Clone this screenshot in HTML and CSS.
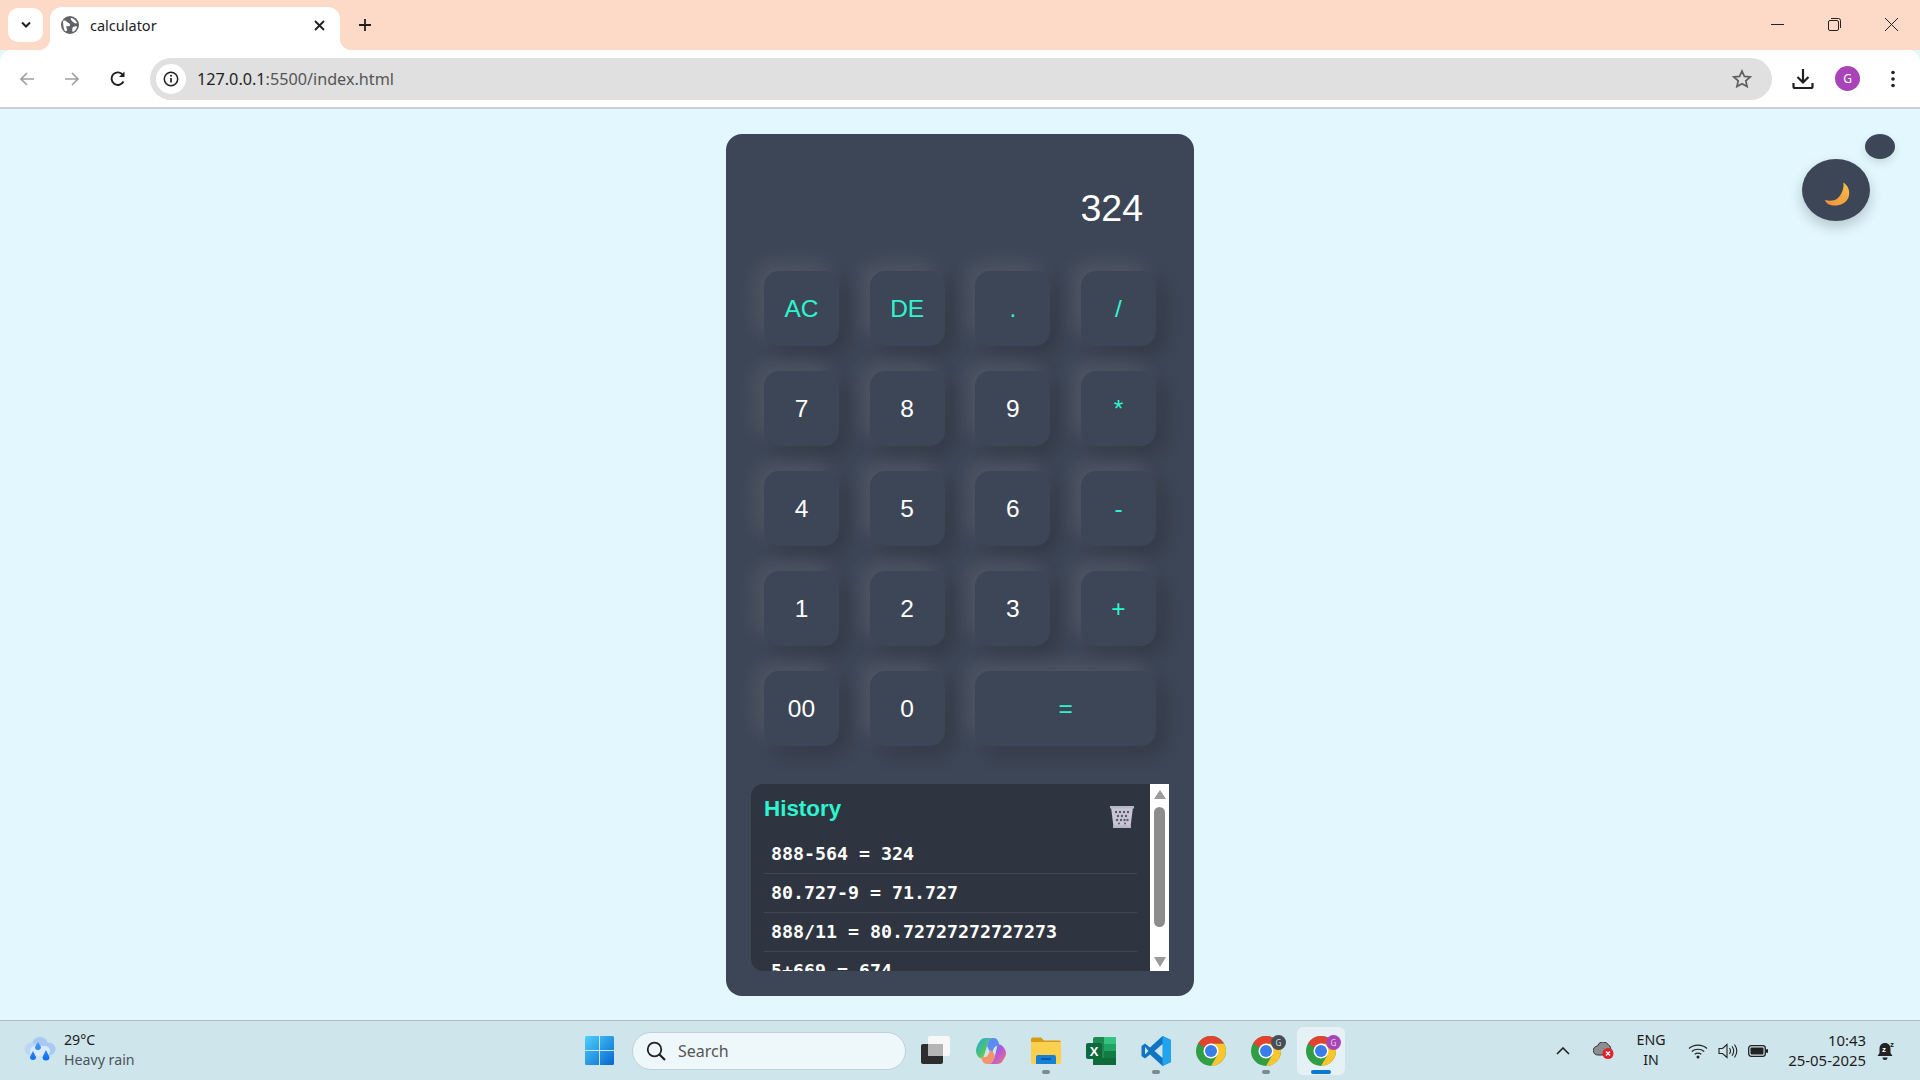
FILE: index.html
```html
<!DOCTYPE html>
<html lang="en">
<head>
<meta charset="utf-8">
<title>calculator</title>
<link rel="stylesheet" href="styles.css">
</head>
<body>
<svg class="defs" width="0" height="0" aria-hidden="true">
  <defs>
    <symbol id="chrome" viewBox="4 4 40 40">
      <circle cx="24" cy="24" r="20" fill="#2f9e44"/>
      <path d="M41.32 14A20 20 0 0 1 24 44l8.66-15L24 14z" fill="#fbc62d"/>
      <path d="M24 4a20 20 0 0 1 17.32 10H24l-8.66 5-8.66-5A20 20 0 0 1 24 4z" fill="#e5412f"/>
      <circle cx="24" cy="24" r="10" fill="#fff"/>
      <circle cx="24" cy="24" r="8" fill="#3b7de8"/>
    </symbol>
  </defs>
</svg>

<header class="tabstrip">
  <button class="tab-search">
    <svg width="12" height="8" viewBox="0 0 12 8"><path d="M2 1.500 6 5.500l4-4" fill="none" stroke="#1f1f1f" stroke-width="2"/></svg>
  </button>
  <div class="tab">
    <svg class="favicon" width="18" height="18" viewBox="0 0 18 18"><circle cx="9" cy="9" r="9" fill="#5f6368"/><path d="M2 5c2-1 3 0 4 1s3 1 3 3-2 1-3 1-1 2 0 3-1 3-2 2S2 9 2 5zM10 2c2 0 5 2 6 5-1 1-3 0-4-1s-3-3-2-4zM12 11c2-1 4-1 4 0s-2 4-4 5c-1 0-1-4 0-5z" fill="#fff"/></svg>
    <span class="tab-title">calculator</span>
    <svg class="tab-close" width="11" height="11" viewBox="0 0 11 11"><path d="M1 1l9 9M10 1l-9 9" stroke="#1f1f1f" stroke-width="1.800"/></svg>
  </div>
  <svg class="new-tab" width="14" height="14" viewBox="0 0 14 14"><path d="M7 1v12M1 7h12" stroke="#1f1f1f" stroke-width="1.800"/></svg>
  <div class="window-controls">
    <svg width="13" height="13" viewBox="0 0 13 13"><path d="M0 6.500h13" stroke="#222" stroke-width="1"/></svg>
    <svg width="13" height="13" viewBox="0 0 13 13"><rect x=".5" y="2.500" width="10" height="10" rx="1.500" fill="none" stroke="#222"/><path d="M3 .5h7.500a2 2 0 0 1 2 2V10" fill="none" stroke="#222"/></svg>
    <svg width="13" height="13" viewBox="0 0 13 13"><path d="M0 0l13 13M13 0 0 13" stroke="#222" stroke-width="1"/></svg>
  </div>
</header>

<nav class="toolbar">
  <div class="nav-buttons">
    <svg width="16" height="16" viewBox="0 0 16 16"><path d="M15 8H2M8 2 2 8l6 6" fill="none" stroke="#a0a0a0" stroke-width="1.700"/></svg>
    <svg width="16" height="16" viewBox="0 0 16 16"><path d="M1 8h13M8 2l6 6-6 6" fill="none" stroke="#a0a0a0" stroke-width="1.700"/></svg>
    <svg width="18" height="18" viewBox="0 0 18 18"><path d="M14.500 11.500A6.300 6.300 0 1 1 14 5" fill="none" stroke="#1f1f1f" stroke-width="1.900"/><path d="M15.500 1.500v5.500H10z" fill="#1f1f1f"/></svg>
  </div>
  <div class="omnibox">
    <span class="site-info">
      <svg width="16" height="16" viewBox="0 0 16 16"><circle cx="8" cy="8" r="6.700" fill="none" stroke="#1f1f1f" stroke-width="1.500"/><path d="M8 7v4.600" stroke="#1f1f1f" stroke-width="1.700"/><circle cx="8" cy="4.800" r="1" fill="#1f1f1f"/></svg>
    </span>
    <span class="url"><span class="url-host">127.0.0.1</span>:5500/index.html</span>
    <svg class="star" width="20" height="20" viewBox="0 0 20 20"><path d="M10 2l2.400 5.400 5.800.6-4.400 3.900 1.300 5.700L10 14.700l-5.100 2.900 1.300-5.700L1.800 8l5.800-.6z" fill="none" stroke="#5f5f5f" stroke-width="1.700"/></svg>
  </div>
  <div class="toolbar-actions">
    <svg width="22" height="22" viewBox="0 0 22 22"><path d="M11 1v13M5.500 9l5.500 5.500L16.500 9" fill="none" stroke="#1f1f1f" stroke-width="2.200"/><path d="M1.500 15v3.500a1.500 1.500 0 0 0 1.500 1.500h16a1.500 1.500 0 0 0 1.500-1.500V15" fill="none" stroke="#1f1f1f" stroke-width="2.200"/></svg>
    <span class="avatar">G</span>
    <svg width="4" height="18" viewBox="0 0 4 18"><circle cx="2" cy="2.500" r="1.800" fill="#222"/><circle cx="2" cy="9" r="1.800" fill="#222"/><circle cx="2" cy="15.500" r="1.800" fill="#222"/></svg>
  </div>
</nav>

<main class="page">
  <section class="calculator">
    <div class="display">324</div>
    <div class="keys">
      <button class="key accent">AC</button>
      <button class="key accent">DE</button>
      <button class="key accent">.</button>
      <button class="key accent">/</button>
      <button class="key">7</button>
      <button class="key">8</button>
      <button class="key">9</button>
      <button class="key accent">*</button>
      <button class="key">4</button>
      <button class="key">5</button>
      <button class="key">6</button>
      <button class="key accent">-</button>
      <button class="key">1</button>
      <button class="key">2</button>
      <button class="key">3</button>
      <button class="key accent">+</button>
      <button class="key">00</button>
      <button class="key">0</button>
      <button class="key accent wide">=</button>
    </div>
    <div class="history">
      <div class="history-body">
        <div class="history-head">
          <h2 class="history-title">History</h2>
          <svg class="trash" width="24" height="23" viewBox="0 0 24 23">
            <path d="M1 2h22l-2.500 20h-17z" fill="#c9c6d4"/>
            <path d="M0 1h24v2.500H0zM3 20.500h18V23H3z" fill="#b9b6c6"/>
            <g fill="#5a5870"><circle cx="6" cy="7" r="1.200"/><circle cx="10" cy="7" r="1.200"/><circle cx="14" cy="7" r="1.200"/><circle cx="18" cy="7" r="1.200"/><circle cx="8" cy="11" r="1.200"/><circle cx="12" cy="11" r="1.200"/><circle cx="16" cy="11" r="1.200"/><circle cx="7" cy="15" r="1.200"/><circle cx="11" cy="15" r="1.200"/><circle cx="14.500" cy="15" r="1.200"/><circle cx="17.500" cy="15" r="1.200"/><circle cx="9" cy="18.500" r="1"/><circle cx="15" cy="18.500" r="1"/></g>
          </svg>
        </div>
        <ul class="history-list">
          <li class="history-item">888-564 = 324</li>
          <li class="history-item">80.727-9 = 71.727</li>
          <li class="history-item">888/11 = 80.72727272727273</li>
          <li class="history-item">5+669 = 674</li>
        </ul>
      </div>
      <div class="scrollbar">
        <span class="arrow-up"></span>
        <span class="thumb"></span>
        <span class="arrow-down"></span>
      </div>
    </div>
  </section>
  <button class="theme-toggle">
    <svg width="27" height="26" viewBox="0 0 28 26">
      <defs><linearGradient id="moon" x1="0" y1="1" x2="1" y2="0"><stop offset="0" stop-color="#f0903a"/><stop offset="1" stop-color="#f7c04a"/></linearGradient></defs>
      <path d="M20 1c5 3 7.500 9 5.500 15S16 25.500 10 25 2 22 1 19c5 2 11 1 14.500-3S21 6 20 1z" fill="url(#moon)"/>
      <circle cx="20" cy="17" r="2.500" fill="none" stroke="#e8a13f" stroke-width=".8"/>
    </svg>
  </button>
  <span class="toggle-dot"></span>
</main>

<footer class="taskbar">
  <div class="weather">
    <svg width="32" height="28" viewBox="0 0 32 28">
      <defs><linearGradient id="drop" x1="0" y1="0" x2="0" y2="1"><stop offset="0" stop-color="#4f9bf5"/><stop offset="1" stop-color="#0b6cf0"/></linearGradient></defs>
      <circle cx="16" cy="8" r="8" fill="#a9c9f5"/><circle cx="7" cy="12" r="6.500" fill="#bcd6f7"/><circle cx="25" cy="12" r="6.500" fill="#a9c9f5"/><rect x="6" y="9" width="20" height="10" rx="5" fill="#dbe9fb"/>
      <path d="M14 5l3 5a3 3 0 1 1-6 0zM9 14l3 6a3 3 0 1 1-6 0zM22 13l3.500 7a3.500 3.500 0 1 1-7 0z" fill="url(#drop)"/>
    </svg>
    <div class="weather-text">
      <span class="temp">29°C</span>
      <span class="cond">Heavy rain</span>
    </div>
  </div>
  <div class="apps">
    <svg class="app win" width="29" height="29" viewBox="0 0 29 29">
      <defs><linearGradient id="win" x1="0" y1="0" x2="1" y2="1"><stop offset="0" stop-color="#4fd0fb"/><stop offset="1" stop-color="#0666cf"/></linearGradient></defs>
      <path d="M1.500 0H14v14H0V1.500A1.500 1.500 0 0 1 1.500 0zM15 0h12.500A1.500 1.500 0 0 1 29 1.500V14H15zM0 15h14v14H1.500A1.500 1.500 0 0 1 0 27.500zM15 15h14v12.500a1.500 1.500 0 0 1-1.500 1.500H15z" fill="url(#win)"/>
    </svg>
    <div class="search">
      <svg width="20" height="20" viewBox="0 0 20 20"><circle cx="8.500" cy="8.500" r="6.800" fill="none" stroke="#222" stroke-width="1.800"/><path d="M13.500 13.500l5.500 5.500" stroke="#222" stroke-width="2.200"/></svg>
      <span>Search</span>
    </div>
    <svg class="app taskview" width="30" height="29" viewBox="0 0 30 29">
      <rect x="0" y="8" width="22" height="20" rx="2" fill="#2d2d2d"/>
      <rect x="7" y="0" width="22" height="20" rx="2" fill="#f7f7f7"/>
      <rect x="7" y="8" width="15" height="12" fill="#b5b5b5"/>
    </svg>
    <svg class="app" width="30" height="28" viewBox="0 0 30 28">
      <defs>
        <linearGradient id="cpA" x1="0" y1="0" x2="1" y2="1"><stop offset="0" stop-color="#26a5e8"/><stop offset=".55" stop-color="#4fc46a"/><stop offset="1" stop-color="#f5d33c"/></linearGradient>
        <linearGradient id="cpB" x1="0" y1="0" x2="1" y2="1"><stop offset="0" stop-color="#3d7bf0"/><stop offset=".5" stop-color="#b65ad8"/><stop offset="1" stop-color="#f5776b"/></linearGradient>
      </defs>
      <path d="M9 1h7c-3 1-4 4-5 8l-3 10c-1 3-3 3-4 2-2-1-4-4-4-7 0-3 2-8 4-10 1-2 3-3 5-3z" fill="url(#cpA)"/>
      <path d="M21 27h-8c3-1 5-4 6-8l2-9c1-3 3-3 4-2 2 1 5 5 5 8 0 4-3 7-4 9-1 1-3 2-5 2z" fill="url(#cpB)"/>
      <path d="M11 9c1-4 2-7 5-8h2c2 0 3 1 4 3l2 5h-3c-2 0-3 2-4 4l-1 4-3-4z" fill="#5c8cf0"/>
      <path d="M19 19c-1 4-3 7-6 8h-2c-2 0-4-1-5-4l-1-3h4c2 0 3-2 4-4l1-3 3 2z" fill="#f2956f"/>
    </svg>
    <svg class="app" width="30" height="27" viewBox="0 0 30 27">
      <path d="M0 2.500A2 2 0 0 1 2 .5h8l3 3h15a2 2 0 0 1 2 2V9H0z" fill="#d79b11"/>
      <path d="M0 5h30v20a2 2 0 0 1-2 2H2a2 2 0 0 1-2-2z" fill="#fcd04f"/>
      <path d="M5 27v-7a2 2 0 0 1 2-2h16a2 2 0 0 1 2 2v7z" fill="#1481d6"/>
      <path d="M10 22h10" stroke="#0b4f96" stroke-width="1.500"/>
    </svg>
    <svg class="app" width="30" height="30" viewBox="0 0 30 30">
      <rect x="7" y="1" width="23" height="28" rx="2" fill="#1f8a50"/>
      <rect x="18" y="1" width="12" height="7" fill="#33c481"/>
      <rect x="18" y="8" width="12" height="7" fill="#21a366"/>
      <rect x="18" y="15" width="12" height="7" fill="#107c41"/>
      <rect x="7" y="22" width="23" height="7" fill="#0f6b3a"/>
      <rect x="0" y="7" width="16" height="16" rx="2" fill="#0e6a3c"/>
      <text x="8" y="20" class="excel-x">X</text>
    </svg>
    <svg class="app" width="30" height="30" viewBox="0 0 30 30">
      <path d="M21.500 0 30 4v22l-8.500 4L9 18.500l-5 4-3.500-2.500v-10L4 7.500l5 4z" fill="#0f75c0"/>
      <path d="M21.500 0 30 4v22l-8.500 4z" fill="#22a3ee"/>
      <path d="M21.500 8 13.500 15l8 7z" fill="#cfe5ec"/>
      <path d="M4 11l3.500 4L4 18.500z" fill="#cfe5ec"/>
    </svg>
    <svg class="app" width="30" height="30"><use href="#chrome"/></svg>
    <span class="app chrome-badged">
      <svg width="30" height="30"><use href="#chrome"/></svg>
      <span class="badge badge-grey">G</span>
    </span>
    <span class="app-active">
      <span class="chrome-badged">
        <svg width="30" height="30"><use href="#chrome"/></svg>
        <span class="badge badge-purple">G</span>
      </span>
    </span>
    <span class="dot dot-folder"></span>
    <span class="dot dot-code"></span>
    <span class="dot dot-chrome"></span>
    <span class="dot-active"></span>
  </div>
  <div class="tray">
    <svg class="tray-chevron" width="14" height="8" viewBox="0 0 14 8"><path d="M1 7l6-6 6 6" fill="none" stroke="#222" stroke-width="1.600"/></svg>
    <svg class="tray-cloud" width="21" height="17" viewBox="0 0 21 17">
      <path d="M5 13a4.500 4.500 0 0 1-.5-9A6 6 0 0 1 15.500 3 4 4 0 0 1 17 9v4z" fill="#8b8f92" stroke="#333" stroke-width="1"/>
      <circle cx="15" cy="11.500" r="5.500" fill="#e0222e"/>
      <path d="M13 9.500l4 4M17 9.500l-4 4" stroke="#fff" stroke-width="1.300"/>
    </svg>
    <div class="lang"><span>ENG</span><span>IN</span></div>
    <div class="status-icons">
      <svg width="20" height="16" viewBox="0 0 20 16"><path d="M1 5.500c5-4.600 13-4.600 18 0M3.800 8.500c3.500-3 8.900-3 12.400 0M6.700 11.300c2-1.500 4.600-1.500 6.600 0" fill="none" stroke="#222" stroke-width="1.200"/><circle cx="10" cy="14" r="1.500" fill="#222"/></svg>
      <svg width="20" height="16" viewBox="0 0 20 16"><path d="M1 5.500h3.500L9 1.500v13l-4.500-4H1z" fill="none" stroke="#222" stroke-width="1.100"/><path d="M11.500 5c1.200 1.800 1.200 4.200 0 6M14 3.200c2 2.900 2 6.700 0 9.600M16.500 1.500c2.800 4 2.800 9 0 13" fill="none" stroke="#222" stroke-width="1.100"/></svg>
      <svg width="20" height="12" viewBox="0 0 20 12"><rect x=".7" y=".7" width="16.600" height="10.600" rx="2.500" fill="none" stroke="#222" stroke-width="1.300"/><rect x="2.500" y="2.500" width="13" height="7" rx="1" fill="#222"/><rect x="18" y="4" width="2" height="4" rx="1" fill="#222"/></svg>
    </div>
    <div class="clock"><span>10:43</span><span>25-05-2025</span></div>
    <svg class="bell" width="19" height="20" viewBox="0 0 19 20">
      <path d="M8 2c3.500 0 5.500 2.500 5.500 6v4l2 3H.5l2-3V8c0-3.500 2-6 5.500-6z" fill="#222"/>
      <path d="M5.500 16.500h5a2.500 2.500 0 0 1-5 0z" fill="#222"/>
      <text x="5" y="11" class="bell-z-inner">z</text>
      <text x="13" y="6" class="bell-z">z</text>
    </svg>
  </div>
</footer>
</body>
</html>
```

FILE: styles.css
```css
* { box-sizing: border-box; }
html, body { margin: 0; height: 100%; }
body {
  width: 1920px;
  height: 1080px;
  overflow: hidden;
  display: flex;
  flex-direction: column;
  font-family: "Liberation Sans", Arial, sans-serif;
  background: #e2f7fe;
}
button { border: 0; padding: 0; font: inherit; cursor: pointer; }
.defs { position: absolute; }

/* tab strip */
.tabstrip {
  height: 50px;
  flex: none;
  background: #fddac7;
  display: flex;
  align-items: flex-end;
  padding-left: 8px;
  font-family: "Noto Sans", sans-serif;
}
.tab-search {
  width: 35px;
  height: 34px;
  background: #fff;
  border-radius: 10px;
  margin-bottom: 8px;
  display: flex;
  align-items: center;
  justify-content: center;
}
.tab {
  position: relative;
  width: 290px;
  height: 43px;
  margin-left: 7px;
  background: #fff;
  border-radius: 12px 12px 0 0;
  display: flex;
  align-items: center;
  padding: 0 15px 7px 11px;
}
.tab::before, .tab::after {
  content: "";
  position: absolute;
  bottom: 0;
  width: 12px;
  height: 12px;
}
.tab::before { left: -12px; background: radial-gradient(circle at 0 0, transparent 12px, #fff 12.5px); }
.tab::after { right: -12px; background: radial-gradient(circle at 100% 0, transparent 12px, #fff 12.5px); }
.favicon { flex: none; }
.tab-title { margin-left: 11px; flex: 1; font-size: 14.500px; color: #222; }
.tab-close { flex: none; }
.new-tab { margin: 0 0 18px 18px; }
.window-controls {
  margin-left: auto;
  display: flex;
  gap: 44px;
  padding: 0 22px 19px 0;
}

/* toolbar */
.toolbar {
  height: 59px;
  flex: none;
  background: #fff;
  border-radius: 12px 12px 0 0;
  border-bottom: 2px solid #cbcfd1;
  display: flex;
  align-items: center;
  font-family: "Noto Sans", sans-serif;
}
.nav-buttons {
  width: 150px;
  flex: none;
  display: flex;
  align-items: center;
  gap: 29px;
  padding-left: 19px;
}
.omnibox {
  flex: none;
  width: 1622px;
  height: 42px;
  border-radius: 21px;
  background: #e0e0e0;
  display: flex;
  align-items: center;
  padding: 0 20px 0 6px;
}
.site-info {
  width: 30px;
  height: 30px;
  border-radius: 50%;
  background: #fff;
  display: flex;
  align-items: center;
  justify-content: center;
}
.url { margin-left: 11px; flex: 1; font-size: 16.200px; color: #555; padding-top: 1px; }
.url-host { color: #1f1f1f; }
.toolbar-actions {
  display: flex;
  align-items: center;
  padding-left: 20px;
}
.avatar {
  width: 25px;
  height: 25px;
  margin: 0 31px 0 21px;
  border-radius: 50%;
  background: #a943b8;
  color: #fff;
  font-size: 12px;
  display: flex;
  align-items: center;
  justify-content: center;
}

/* page */
.page {
  flex: 1;
  min-height: 0;
  position: relative;
  display: flex;
  justify-content: center;
  align-items: flex-start;
  padding-top: 25px;
}
.calculator {
  width: 468px;
  height: 862px;
  background: #3d4656;
  border-radius: 16px;
  padding: 0 25px;
}
.display {
  height: 137px;
  padding: 52px 26px 0 0;
  text-align: right;
  color: #fff;
  font-size: 37.500px;
  line-height: 44px;
}
.keys {
  display: grid;
  grid-template-columns: repeat(4, 75px);
  grid-auto-rows: 75px;
  justify-content: space-between;
  row-gap: 25px;
  margin: 0 13px;
}
.key {
  background: #3d4656;
  border-radius: 15px;
  color: #fff;
  font-size: 24.500px;
  box-shadow: -8px -8px 20px rgba(255, 255, 255, .1), 8px 8px 20px rgba(0, 0, 0, .18);
}
.accent { color: #2df5cf; }
.wide { grid-column: span 2; }

.history {
  margin-top: 38px;
  height: 187px;
  display: flex;
  background: #2f3540;
  border-radius: 12px 0 0 12px;
  overflow: hidden;
}
.history-body { flex: 1; min-width: 0; padding: 0 13px; }
.history-head {
  height: 51px;
  display: flex;
  justify-content: space-between;
  align-items: flex-start;
  padding-right: 3px;
}
.history-title {
  margin: 12px 0 0;
  color: #2df5cf;
  font-size: 22.400px;
  line-height: 26px;
  font-weight: 700;
}
.trash { margin-top: 21px; }
.history-list { list-style: none; margin: 0; padding: 0; }
.history-item {
  height: 39px;
  padding: 8px 0 0 7px;
  border-bottom: 1px solid #414853;
  color: #fff;
  font-family: "DejaVu Sans Mono", monospace;
  font-size: 18.270px;
  font-weight: 600;
  line-height: 22px;
}

.scrollbar {
  width: 19px;
  flex: none;
  background: #fff;
  display: flex;
  flex-direction: column;
  align-items: center;
  padding-top: 6px;
}
.arrow-up, .arrow-down { width: 0; height: 0; border-left: 6.500px solid transparent; border-right: 6.500px solid transparent; }
.arrow-up { border-bottom: 9px solid #9a9a9a; }
.arrow-down { border-top: 10px solid #9a9a9a; margin-top: 30px; }
.thumb { width: 11px; height: 120px; margin-top: 8px; border-radius: 6px; background: #8c8c8c; }

.theme-toggle {
  position: absolute;
  left: 1802px;
  top: 50px;
  width: 68px;
  height: 62px;
  border-radius: 50%;
  background: #3d4656;
  box-shadow: 0 6px 14px rgba(0, 0, 0, .2);
  display: flex;
  align-items: center;
  justify-content: center;
  padding: 7px 0 0 2px;
}
.toggle-dot {
  position: absolute;
  left: 1865px;
  top: 25px;
  width: 30px;
  height: 25px;
  border-radius: 50%;
  background: #3d4656;
  box-shadow: 0 4px 10px rgba(0, 0, 0, .12);
}

/* taskbar */
.taskbar {
  height: 60px;
  flex: none;
  background: #cee5ec;
  border-top: 1px solid #aebfc6;
  display: grid;
  grid-template-columns: 585px 1fr auto;
  align-items: center;
  font-family: "Noto Sans", sans-serif;
  color: #1c1c1c;
}
.weather { display: flex; align-items: center; gap: 8px; padding-left: 24px; }
.weather-text { display: flex; flex-direction: column; font-size: 14.200px; line-height: 20px; padding-bottom: 2px; }
.cond { color: #4b555a; }
.apps { position: relative; display: flex; align-items: center; height: 59px; }
.app { flex: none; display: block; margin-right: 25px; }
.app.win { margin-right: 18px; }
.search {
  width: 274px;
  height: 38px;
  flex: none;
  margin-right: 15px;
  border-radius: 19px;
  background: #eef7fa;
  border: 1px solid #bfd2d9;
  display: flex;
  align-items: center;
  gap: 12px;
  padding-left: 13px;
  font-size: 16px;
  color: #555;
}
.chrome-badged { position: relative; display: block; width: 30px; height: 30px; }
.chrome-badged svg { display: block; }
.app.chrome-badged { margin-right: 16px; }
.badge {
  position: absolute;
  right: -5px;
  top: -1px;
  width: 15px;
  height: 15px;
  border-radius: 50%;
  color: #ddd;
  font-size: 8px;
  display: flex;
  align-items: center;
  justify-content: center;
}
.badge-grey { background: #454d57; }
.badge-purple { background: #a943b8; }
.app-active {
  flex: none;
  width: 48px;
  height: 48px;
  border-radius: 6px;
  background: #e6f1f5;
  display: flex;
  align-items: center;
  justify-content: center;
}
.dot, .dot-active { position: absolute; bottom: 6px; height: 4px; border-radius: 2px; }
.dot { width: 8px; background: #7d8a90; }
.dot-folder { left: 457px; }
.dot-code { left: 567px; }
.dot-chrome { left: 677px; }
.dot-active { left: 726px; width: 20px; background: #0b78d4; }

.tray { display: flex; align-items: center; padding-right: 24px; }
.tray-chevron { margin-right: 23px; }
.tray-cloud { margin-right: 22px; }
.lang {
  width: 30px;
  display: flex;
  flex-direction: column;
  align-items: center;
  font-size: 14.200px;
  line-height: 20px;
  margin-right: 22px;
  padding-bottom: 2px;
}
.status-icons { display: flex; align-items: center; gap: 10px; }
.clock {
  width: 98px;
  display: flex;
  flex-direction: column;
  align-items: flex-end;
  font-size: 14.900px;
  line-height: 20px;
  margin-right: 11px;
  padding-bottom: 2px;
}
.excel-x { fill: #fff; font: 700 13px "Liberation Sans", sans-serif; text-anchor: middle; }
.bell-z { fill: #222; font: 700 8px "Liberation Sans", sans-serif; }
.bell-z-inner { fill: #fff; font: 700 8px "Liberation Sans", sans-serif; }
```
